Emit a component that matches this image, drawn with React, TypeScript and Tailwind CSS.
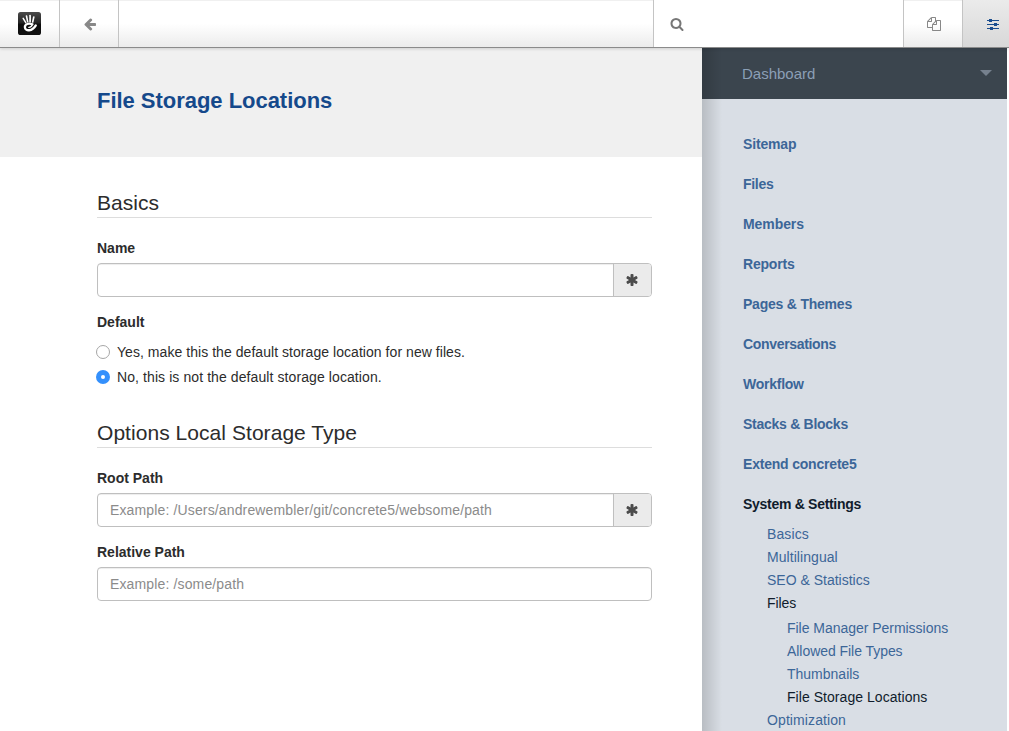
import React from "react";

const paths = {
  arrow:
    "M1664 896v128q0 53-32.5 90.5t-84.5 37.5h-704l293 294q38 36 38 90t-38 90l-75 76q-37 37-90 37-52 0-91-37l-651-652q-37-37-37-90 0-52 37-91l651-650q38-38 91-38 52 0 90 38l75 74q38 38 38 91t-38 91l-293 293h704q52 0 84.5 37.5t32.5 90.5z",
  search:
    "M1216 832q0-185-131.5-316.5t-316.5-131.5-316.5 131.5-131.5 316.5 131.5 316.5 316.5 131.5 316.5-131.5 131.5-316.5zm512 832q0 52-38 90t-90 38q-54 0-90-38l-343-342q-179 124-399 124-143 0-273.5-55.5t-225-150-150-225-55.5-273.5 55.5-273.5 150-225 225-150 273.5-55.5 273.5 55.5 225 150 150 225 55.5 273.5q0 220-124 399l343 343q37 37 37 90z",
  files:
    "M1696 384q40 0 68 28t28 68v1216q0 40-28 68t-68 28h-960q-40 0-68-28t-28-68v-288h-544q-40 0-68-28t-28-68v-672q0-40 20-88t48-76l408-408q28-28 76-48t88-20h416q40 0 68 28t28 68v328q68-40 128-40h416zm-544 213l-299 299h299v-299zm-640-384l-299 299h299v-299zm196 647l316-316v-416h-384v416q0 40-28 68t-68 28h-416v640h512v-256q0-40 20-88t48-76zm956 804v-1152h-384v416q0 40-28 68t-68 28h-416v640h896z",
  asterisk:
    "M1546 1050q46 26 59.5 77.5t-12.5 97.5l-64 110q-26 46-77.5 59.5t-97.5-12.5l-266-153v307q0 52-38 90t-90 38h-128q-52 0-90-38t-38-90v-307l-266 153q-46 26-97.5 12.5t-77.5-59.5l-64-110q-26-46-12.5-97.5t59.5-77.5l266-154-266-154q-46-26-59.5-77.5t12.5-97.5l64-110q26-46 77.5-59.5t97.5 12.5l266 153v-307q0-52 38-90t90-38h128q52 0 90 38t38 90v307l266-153q46-26 97.5-12.5t77.5 59.5l64 110q26 46 12.5 97.5t-59.5 77.5l-266 154z",
};

function Icon({ name, className }: { name: keyof typeof paths; className: string }) {
  return (
    <svg viewBox="0 0 1792 1792" fill="currentColor" className={className}>
      <path d={paths[name]} />
    </svg>
  );
}

function Logo() {
  return (
    <svg viewBox="0 0 23 23" className="size-[23px]">
      <defs>
        <linearGradient id="logo-bg" x1="0" y1="0" x2="0" y2="1">
          <stop offset="0" stopColor="#4a4a4a" />
          <stop offset="0.45" stopColor="#262626" />
          <stop offset="0.55" stopColor="#0c0c0c" />
          <stop offset="1" stopColor="#111" />
        </linearGradient>
      </defs>
      <rect width="23" height="23" rx="2.6" fill="url(#logo-bg)" />
      <g fill="none" stroke="#fff" strokeLinecap="round">
        <path d="M5.2 6.4 7.8 10.6" strokeWidth="1.5" />
        <path d="M8.5 4 9.7 9.8" strokeWidth="1.6" />
        <path d="M12.1 3.5V9.6" strokeWidth="1.7" />
        <path d="M15.8 5 14.7 10" strokeWidth="1.6" />
        <path d="M14.4 12.3C11 10.9 6.7 12 6.9 15.2 7.2 19.5 14.2 19.6 17.8 13.4" strokeWidth="2.3" />
        <path d="M10.8 15.4C12.4 15.5 13.6 14.6 14.4 12.6" strokeWidth="1.4" />
      </g>
    </svg>
  );
}

function Toolbar() {
  const cell =
    "flex items-center justify-center border-r border-[#c4c4c4] bg-linear-to-b from-white from-50% to-[#ececec] shadow-[inset_0_1px_0_#f0f0f0]";
  return (
    <header className="relative z-10 flex h-12 shrink-0 border-b border-[#8b8b8b] bg-white shadow-[0_1px_3px_rgba(0,0,0,0.14)]">
      <div className={cell + " w-[60px]"}>
        <Logo />
      </div>
      <div className={cell + " w-[59px] pl-[2px]"}>
        <Icon name="arrow" className="size-[14px] text-[#888]" />
      </div>
      <div className={cell + " flex-1"} />
      <div className="flex w-[249px] items-center bg-white pl-4">
        <Icon name="search" className="size-[14px] text-[#777]" />
      </div>
      <div className={cell + " w-[60px] border-l pl-px pt-px"}>
        <Icon name="files" className="size-[14px] text-[#888]" />
      </div>
      <div className="flex w-[46px] items-center bg-linear-to-b from-[#ebebeb] to-[#d8d8d8] pl-6 pt-0.5">
        <svg viewBox="0 0 12 11" className="h-[11px] w-3" fill="#1a4d8f">
          <path d="M0 1h12v1H0zM0 5h12v1H0zM0 9h12v1H0z" />
          <path d="M2 0h3v3H2zM7 4h3v3H7zM3 8h3v3H3z" />
        </svg>
      </div>
    </header>
  );
}

function Legend({ children, className }: { children: React.ReactNode; className: string }) {
  return (
    <h2
      className={
        "flex h-[30px] items-center border-b border-[#ddd] pb-px text-[21px] leading-[29px] tracking-[0.05px] text-[#2c2c2c] " + className
      }
    >
      {children}
    </h2>
  );
}

function Label({ children, className }: { children: React.ReactNode; className: string }) {
  return <div className={"text-sm leading-5 font-bold text-[#2c2c2c] " + className}>{children}</div>;
}

function Field({ placeholder, required, className }: { placeholder?: string; required?: boolean; className: string }) {
  return (
    <div className={"flex h-[34px] overflow-hidden rounded border border-[#bfbfbf] bg-white " + className}>
      <input
        placeholder={placeholder}
        className="min-w-0 flex-1 px-3 text-sm tracking-[0.14px] shadow-[inset_0_1px_1px_rgba(0,0,0,0.075)] outline-none placeholder:text-[#8b8b8b]"
      />
      {required && (
        <div className="flex w-[38px] items-center justify-center border-l border-[#bfbfbf] bg-[#ebebeb] pr-px">
          <Icon name="asterisk" className="size-[14px] text-[#4c4c4c]" />
        </div>
      )}
    </div>
  );
}

function Radio({ checked }: { checked?: boolean }) {
  return checked ? (
    <span className="flex size-[14px] items-center justify-center rounded-full bg-[#3490fc]">
      <span className="size-1 rounded-full bg-white" />
    </span>
  ) : (
    <span className="size-[14px] rounded-full border border-[#a6a6a6] bg-white" />
  );
}

const menu = [
  { text: "Sitemap", track: "tracking-[-0.15px]" },
  { text: "Files", track: "tracking-[-0.3px]" },
  { text: "Members", track: "tracking-[-0.08px]" },
  { text: "Reports", track: "tracking-[-0.2px]" },
  { text: "Pages & Themes", track: "tracking-[-0.22px]" },
  { text: "Conversations", track: "tracking-[-0.33px]" },
  { text: "Workflow", track: "tracking-[-0.25px]" },
  { text: "Stacks & Blocks", track: "tracking-[-0.27px]" },
  { text: "Extend concrete5", track: "tracking-[-0.2px]" },
];

function Sidebar() {
  return (
    <aside className="relative mr-0.5 flex w-[305px] flex-col bg-[#d9dee5] text-sm text-[#3c6698]">
      <div className="flex h-[51px] shrink-0 items-center justify-between bg-[#3b454e] pr-[15px] pl-10 text-[#8b9fb6]">
        <span className="text-[15px]">Dashboard</span>
        <svg viewBox="0 0 12 6" className="-mt-0.5 h-1.5 w-3" fill="#76818e">
          <path d="M0 0h12L6 6z" />
        </svg>
      </div>
      <nav className="flex flex-col pt-[25px] pl-[41px] leading-[40px] font-bold">
        {menu.map((m) => (
          <a key={m.text} className={m.track}>{m.text}</a>
        ))}
        <a className="tracking-[-0.29px] text-[#101c2c]">System &amp; Settings</a>
      </nav>
      <nav className="-mt-[1px] flex flex-col pl-[65px] leading-[23px]">
        <a className="tracking-[0.1px]">Basics</a>
        <a className="tracking-[0.06px]">Multilingual</a>
        <a>SEO &amp; Statistics</a>
        <a className="tracking-[-0.1px] text-[#101c2c]">Files</a>
        <div className="flex flex-col pt-0.5 pl-5">
          <a className="tracking-[-0.03px]">File Manager Permissions</a>
          <a className="tracking-[-0.05px]">Allowed File Types</a>
          <a>Thumbnails</a>
          <a className="tracking-[0.05px] text-[#101c2c]">File Storage Locations</a>
        </div>
        <a className="tracking-[0.1px]">Optimization</a>
      </nav>
      <div className="absolute inset-y-0 left-0 w-5 bg-linear-to-r from-black/15 to-transparent" />
    </aside>
  );
}

export default function App() {
  return (
    <div className="flex h-[731px] w-[1009px] flex-col overflow-hidden bg-white font-['Liberation_Sans',Arial,sans-serif]">
      <Toolbar />
      <div className="flex min-h-0 flex-1">
        <main className="flex w-[702px] flex-col">
          <div className="h-[109px] bg-[#f0f0f0] pt-[38px] pl-[97px]">
            <h1 className="text-[22px] leading-[30px] font-bold tracking-[-0.03px] text-[#15498b]">File Storage Locations</h1>
          </div>
          <form className="flex w-[652px] flex-col pt-[31px] pl-[97px]">
            <Legend className="">Basics</Legend>
            <Label className="mt-5">Name</Label>
            <Field required className="mt-[5px]" />
            <Label className="mt-[15px]">Default</Label>
            <div className="mt-2.5 -ml-px flex flex-col gap-[5px] text-sm leading-5 text-[#2c2c2c]">
              <label className="flex items-center gap-[7px]">
                <Radio />
                <span className="tracking-[0.05px]">Yes, make this the default storage location for new files.</span>
              </label>
              <label className="flex items-center gap-[7px]">
                <Radio checked />
                <span className="tracking-[0.09px]">No, this is not the default storage location.</span>
              </label>
            </div>
            <Legend className="mt-[31px]">Options Local Storage Type</Legend>
            <Label className="mt-5">Root Path</Label>
            <Field required placeholder="Example: /Users/andrewembler/git/concrete5/websome/path" className="mt-[5px]" />
            <Label className="mt-[15px]">Relative Path</Label>
            <Field placeholder="Example: /some/path" className="mt-[5px]" />
          </form>
        </main>
        <Sidebar />
      </div>
    </div>
  );
}
